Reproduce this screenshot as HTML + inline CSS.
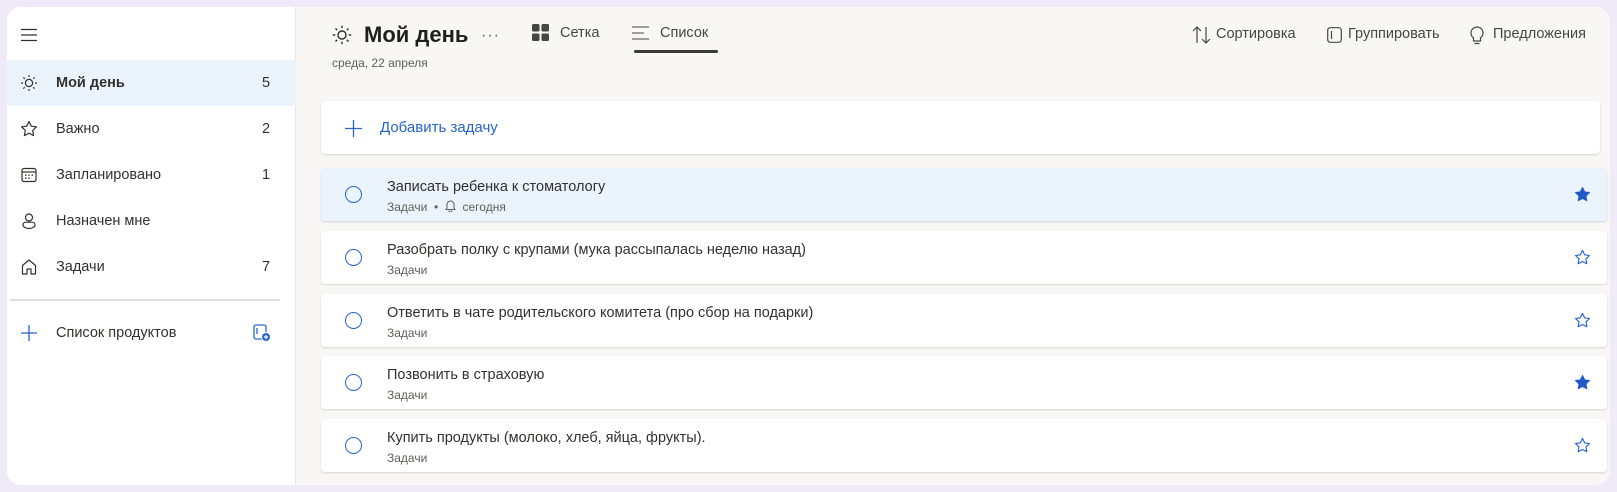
<!DOCTYPE html>
<html><head><meta charset="utf-8"><style>
*{box-sizing:border-box;margin:0;padding:0}
body{width:1617px;height:492px;background:#efe9f8;font-family:"Liberation Sans",sans-serif;position:relative;overflow:hidden}
.panel{position:absolute;left:7px;top:7px;width:1603px;height:478px;background:#f8f7f6;border-radius:14px;overflow:hidden}
.side{position:absolute;left:0;top:0;width:289px;height:478px;background:#fff;border-right:1px solid #e5e5e5}
.row{position:absolute;left:0;width:289px;height:46px;display:flex;align-items:center;font-size:14.5px;color:#323130}
.row .ic{position:absolute;left:13px;top:14px;width:18px;height:18px}
.row .t{position:absolute;left:49px}
.row .c{position:absolute;left:255px}
.sel{background:#ebf3fc}
.abs{position:absolute}
.card{position:absolute;left:314px;width:1286px;height:53px;background:#fff;border-radius:4px;box-shadow:0 1px 2px rgba(0,0,0,.14)}
.card .circ{position:absolute;left:24px;top:18px;width:17px;height:17px;border:1.5px solid #2564cf;border-radius:50%}
.card .ti{position:absolute;left:66px;top:11px;font-size:14.5px;color:#323130}
.card .su{position:absolute;left:66px;top:32px;font-size:12px;color:#605e5c}
.card svg.st{position:absolute;left:1253px;top:18px}
.tb{position:absolute;top:24px;font-size:14.5px;color:#323130}
</style></head><body>
<div class="panel">
 <div class="side">
  <svg class="abs" style="left:13px;top:21px" width="18" height="14" viewBox="0 0 18 14"><path d="M1 1.5h16M1 7h16M1 12.5h16" stroke="#323130" stroke-width="1.3"/></svg>
  <div class="row sel" style="top:53px"><svg class="ic" viewBox="0 0 18 18"><circle cx="9" cy="9" r="3.6" fill="none" stroke="#323130" stroke-width="1.2"/><g stroke="#323130" stroke-width="1.2" stroke-linecap="round"><path d="M9 1.5v1M9 15.5v1M1.5 9h1M15.5 9h1M3.7 3.7l.7.7M13.6 13.6l.7.7M3.7 14.3l.7-.7M13.6 4.4l.7-.7"/></g></svg><span class="t" style="font-weight:bold">Мой день</span><span class="c">5</span></div>
  <div class="row" style="top:99px"><svg class="ic" viewBox="0 0 18 18"><path d="M9 1.5l2.3 4.7 5.1.7-3.7 3.6.9 5.1L9 13.2l-4.6 2.4.9-5.1-3.7-3.6 5.1-.7z" fill="none" stroke="#323130" stroke-width="1.2" stroke-linejoin="round"/></svg><span class="t">Важно</span><span class="c">2</span></div>
  <div class="row" style="top:145px"><svg class="ic" viewBox="0 0 18 18"><rect x="2" y="2.5" width="14" height="13" rx="2" fill="none" stroke="#323130" stroke-width="1.2"/><path d="M2 6h14" stroke="#323130" stroke-width="1.2"/><g fill="#323130"><rect x="5" y="8.5" width="1.4" height="1.4"/><rect x="8.3" y="8.5" width="1.4" height="1.4"/><rect x="11.6" y="8.5" width="1.4" height="1.4"/><rect x="5" y="11.5" width="1.4" height="1.4"/><rect x="8.3" y="11.5" width="1.4" height="1.4"/></g></svg><span class="t">Запланировано</span><span class="c">1</span></div>
  <div class="row" style="top:191px"><svg class="ic" viewBox="0 0 18 18"><circle cx="9" cy="5.5" r="3.5" fill="none" stroke="#323130" stroke-width="1.2"/><path d="M3 13c0-2 1.5-2.8 3-2.8h6c1.5 0 3 .8 3 2.8 0 2-3 3.5-6 3.5S3 15 3 13z" fill="none" stroke="#323130" stroke-width="1.2"/></svg><span class="t">Назначен мне</span></div>
  <div class="row" style="top:237px"><svg class="ic" viewBox="0 0 18 18"><path d="M2.5 16V7.5L9 2l6.5 5.5V16h-4.5v-5H7v5z" fill="none" stroke="#323130" stroke-width="1.2" stroke-linejoin="round"/></svg><span class="t">Задачи</span><span class="c">7</span></div>
  <div class="abs" style="left:3px;top:292px;width:270px;height:2px;background:#e1dfdd"></div>
  <div class="row" style="top:303px"><svg class="ic" viewBox="0 0 18 18"><path d="M9 1v16M1 9h16" stroke="#2564cf" stroke-width="1.3"/></svg><span class="t">Список продуктов</span>
   <svg class="abs" style="left:246px;top:14px" width="18" height="18" viewBox="0 0 18 18"><rect x="1" y="1" width="12" height="14" rx="2" fill="none" stroke="#2564cf" stroke-width="1.3"/><path d="M4 4v6" stroke="#2564cf" stroke-width="1.3"/><circle cx="13" cy="13" r="4.5" fill="#2564cf" stroke="#fff" stroke-width="1"/><path d="M13 10.8v4.4M10.8 13h4.4" stroke="#fff" stroke-width="1.2"/></svg></div>
 </div>

 <svg class="abs" style="left:325px;top:18px" width="20" height="20" viewBox="0 0 18 18"><circle cx="9" cy="9" r="3.6" fill="none" stroke="#323130" stroke-width="1.3"/><g stroke="#323130" stroke-width="1.3" stroke-linecap="round"><path d="M9 1.2v1.2M9 15.6v1.2M1.2 9h1.2M15.6 9h1.2M3.5 3.5l.8.8M13.7 13.7l.8.8M3.5 14.5l.8-.8M13.7 4.3l.8-.8"/></g></svg>
 <div class="abs" style="left:357px;top:15px;font-size:22px;font-weight:bold;color:#201f1e">Мой день</div>
 <div class="abs" style="left:474px;top:20px;font-size:16px;color:#605e5c;letter-spacing:1px">···</div>
 <svg class="abs" style="left:525px;top:17px" width="17" height="17" viewBox="0 0 17 17"><g fill="#484644"><rect x="0" y="0" width="7.5" height="7.5" rx="1.5"/><rect x="9.5" y="0" width="7.5" height="7.5" rx="1.5"/><rect x="0" y="9.5" width="7.5" height="7.5" rx="1.5"/><rect x="9.5" y="9.5" width="7.5" height="7.5" rx="1.5"/></g></svg>
 <div class="tb" style="left:553px;top:18px;color:#484644">Сетка</div>
 <svg class="abs" style="left:625px;top:19px" width="18" height="14" viewBox="0 0 18 14"><path d="M0 1h17M0 7h12M0 13h17" stroke="#484644" stroke-width="1.1"/></svg>
 <div class="tb" style="left:653px;top:18px;color:#484644">Список</div>
 <div class="abs" style="left:627px;top:43px;width:84px;height:3px;border-radius:2px;background:#3b3a39"></div>
 <div class="abs" style="left:325px;top:49px;font-size:12px;color:#605e5c">среда, 22 апреля</div>

 <svg class="abs" style="left:1185px;top:19px" width="20" height="18" viewBox="0 0 20 18"><path d="M5 17V1M1 5l4-4 4 4M14 1v16M10 13l4 4 4-4" fill="none" stroke="#484644" stroke-width="1.2"/></svg>
 <div class="tb" style="left:1209px;top:19px;color:#484644">Сортировка</div>
 <svg class="abs" style="left:1320px;top:20px" width="15" height="16" viewBox="0 0 15 16"><rect x=".7" y=".7" width="13.6" height="14.6" rx="2.5" fill="none" stroke="#484644" stroke-width="1.2"/><path d="M4.5 4v8" stroke="#484644" stroke-width="1.2"/></svg>
 <div class="tb" style="left:1341px;top:19px;color:#484644">Группировать</div>
 <svg class="abs" style="left:1463px;top:19px" width="14" height="19" viewBox="0 0 14 19"><path d="M7 1a6 6 0 0 0-3.5 10.9V15h7v-3.1A6 6 0 0 0 7 1zM4.5 17.5h5" fill="none" stroke="#484644" stroke-width="1.2"/></svg>
 <div class="tb" style="left:1486px;top:19px;color:#484644">Предложения</div>

 <div class="card" style="top:94px;width:1279px">
  <svg class="abs" style="left:24px;top:19px" width="17" height="17" viewBox="0 0 17 17"><path d="M8.5 0v17M0 8.5h17" stroke="#2564cf" stroke-width="1.3"/></svg>
  <div class="abs" style="left:59px;top:18px;font-size:15px;color:#2564cf">Добавить задачу</div>
 </div>

 <div class="card" style="top:161px;background:#ebf3fc"><div class="circ"></div><div class="ti">Записать ребенка к стоматологу</div><div class="su">Задачи &nbsp;•&nbsp; <svg width="11" height="12" viewBox="0 0 11 12" style="vertical-align:-1px"><path d="M5.5 1a3.5 3.5 0 0 0-3.5 3.5V8L1 9.5h9L9 8V4.5A3.5 3.5 0 0 0 5.5 1zM4 10.5a1.5 1.5 0 0 0 3 0" fill="none" stroke="#605e5c" stroke-width="1"/></svg>&nbsp; сегодня</div>
  <svg class="st" width="17" height="17" viewBox="0 0 18 18"><path d="M9 1.5l2.3 4.7 5.1.7-3.7 3.6.9 5.1L9 13.2l-4.6 2.4.9-5.1-3.7-3.6 5.1-.7z" fill="#2059c8" stroke="#2059c8" stroke-width="1" stroke-linejoin="round"/></svg></div>
 <div class="card" style="top:224px"><div class="circ"></div><div class="ti">Разобрать полку с крупами (мука рассыпалась неделю назад)</div><div class="su">Задачи</div>
  <svg class="st" width="17" height="17" viewBox="0 0 18 18"><path d="M9 1.5l2.3 4.7 5.1.7-3.7 3.6.9 5.1L9 13.2l-4.6 2.4.9-5.1-3.7-3.6 5.1-.7z" fill="none" stroke="#2564cf" stroke-width="1.2" stroke-linejoin="round"/></svg></div>
 <div class="card" style="top:287px"><div class="circ"></div><div class="ti">Ответить в чате родительского комитета (про сбор на подарки)</div><div class="su">Задачи</div>
  <svg class="st" width="17" height="17" viewBox="0 0 18 18"><path d="M9 1.5l2.3 4.7 5.1.7-3.7 3.6.9 5.1L9 13.2l-4.6 2.4.9-5.1-3.7-3.6 5.1-.7z" fill="none" stroke="#2564cf" stroke-width="1.2" stroke-linejoin="round"/></svg></div>
 <div class="card" style="top:349px"><div class="circ"></div><div class="ti">Позвонить в страховую</div><div class="su">Задачи</div>
  <svg class="st" width="17" height="17" viewBox="0 0 18 18"><path d="M9 1.5l2.3 4.7 5.1.7-3.7 3.6.9 5.1L9 13.2l-4.6 2.4.9-5.1-3.7-3.6 5.1-.7z" fill="#2059c8" stroke="#2059c8" stroke-width="1" stroke-linejoin="round"/></svg></div>
 <div class="card" style="top:412px"><div class="circ"></div><div class="ti">Купить продукты (молоко, хлеб, яйца, фрукты).</div><div class="su">Задачи</div>
  <svg class="st" width="17" height="17" viewBox="0 0 18 18"><path d="M9 1.5l2.3 4.7 5.1.7-3.7 3.6.9 5.1L9 13.2l-4.6 2.4.9-5.1-3.7-3.6 5.1-.7z" fill="none" stroke="#2564cf" stroke-width="1.2" stroke-linejoin="round"/></svg></div>
</div>
</body></html>
